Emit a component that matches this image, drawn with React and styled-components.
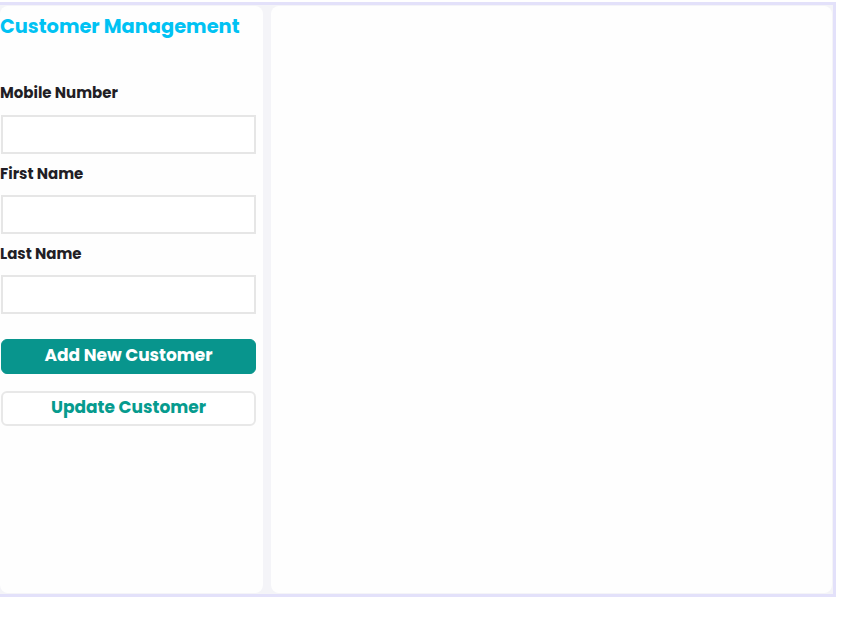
import styled, { createGlobalStyle } from 'styled-components';

const GlobalStyle = createGlobalStyle`
  html, body {
    margin: 0;
    padding: 0;
    background: #ffffff;
    overflow: hidden;
  }
  body {
    font-family: 'Poppins', 'Open Sans', 'Liberation Sans', sans-serif;
  }
`;

const Frame = styled.div`
  box-sizing: border-box;
  width: 840px;
  height: 595px;
  margin: 2px 0 0 -4px;
  border: 3px solid #e3e1fa;
  padding: 1px;
  background: #f4f4f8;
  display: flex;
  gap: 8px;
`;

const Panel = styled.section`
  box-sizing: border-box;
  background: #fefefe;
  border-radius: 8px;
  width: ${(p) => (p.$width ? `${p.$width}px` : 'auto')};
  flex: ${(p) => (p.$width ? 'none' : '1')};
  display: flex;
  flex-direction: column;
`;

const Title = styled.h2`
  margin: 7px 0 0;
  font-size: 19.4px;
  line-height: 28px;
  font-weight: 700;
  color: #00c2f3;
`;

const Form = styled.div`
  margin-top: 42px;
  display: flex;
  flex-direction: column;
`;

const Label = styled.label`
  font-size: 15px;
  line-height: 20px;
  font-weight: 700;
  color: #221e25;
  margin-bottom: ${(p) => (p.$first ? 12 : 11)}px;
`;

const Input = styled.input`
  box-sizing: border-box;
  width: 255px;
  height: 39px;
  margin: 0 0 10px 1px;
  border: 2px solid #e6e6e6;
  background: #ffffff;
  font: inherit;
  outline: none;
`;

const Button = styled.button`
  box-sizing: border-box;
  width: 255px;
  height: 35px;
  margin-left: 1px;
  margin-top: ${(p) => p.$top}px;
  padding: 0 0 3px;
  border-radius: 6px;
  font-family: inherit;
  font-size: 17px;
  font-weight: 700;
  cursor: pointer;
  color: ${(p) => (p.$primary ? '#ffffff' : '#069b8e')};
  background: ${(p) => (p.$primary ? '#08958d' : '#ffffff')};
  border: ${(p) => (p.$primary ? '1px solid #08958d' : '2px solid #e8e8e8')};
`;

export default function App() {
  return (
    <>
      <GlobalStyle />
      <Frame>
        <Panel $width={263}>
          <Title>Customer Management</Title>
          <Form>
            <Label $first>Mobile Number</Label>
            <Input type="text" />
            <Label>First Name</Label>
            <Input type="text" />
            <Label>Last Name</Label>
            <Input type="text" />
            <Button $primary $top={15}>Add New Customer</Button>
            <Button $top={17}>Update Customer</Button>
          </Form>
        </Panel>
        <Panel />
      </Frame>
    </>
  );
}
